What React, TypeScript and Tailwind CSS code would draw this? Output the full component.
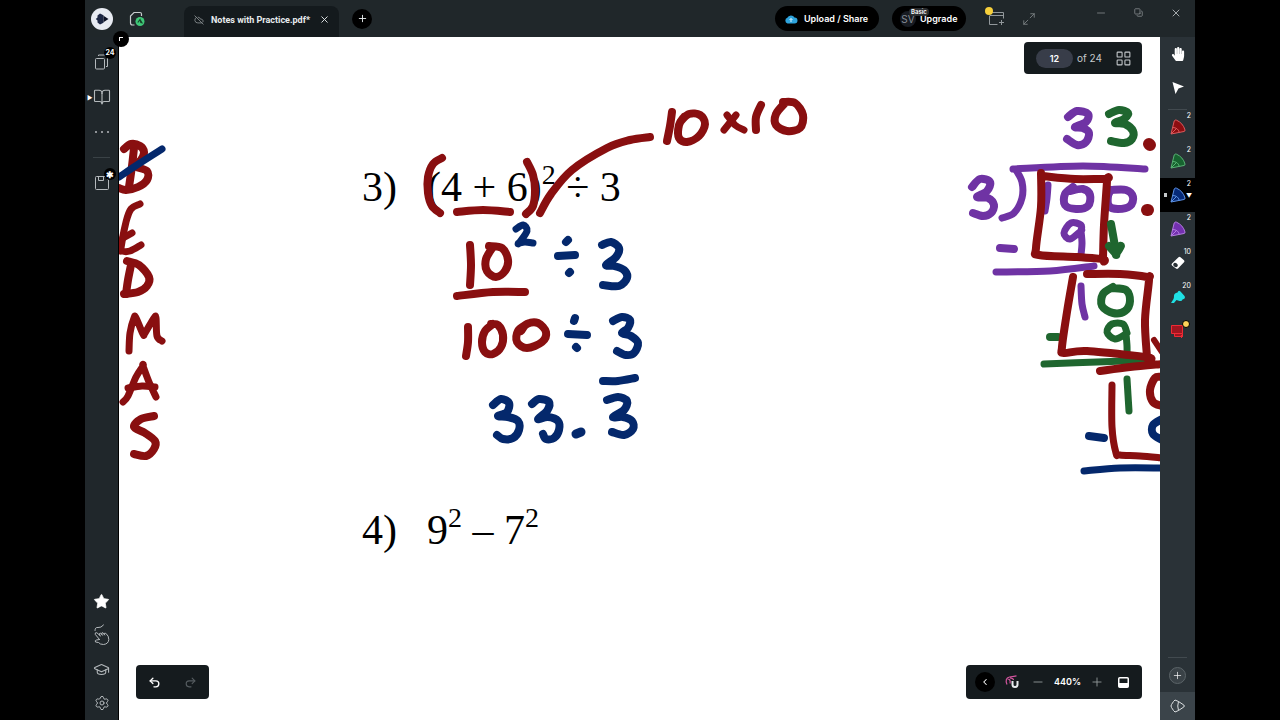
import type { ReactNode } from 'react'
import { BookOpen, ChevronLeft, CloudOff, Copy, GraduationCap, LayoutGrid, Maximize2, Minus, Plus, Redo2, Settings, Star, Undo2, X } from 'lucide-react'
import { FaHandPaper } from 'react-icons/fa'

type Point = [number, number]

interface Stroke {
  color: string
  points: Point[]
  width?: number
}

const RED = '#890f10'
const BLUE = '#04286c'
const PURPLE = '#6f33a4'
const GREEN = '#1f662f'

// Pen strokes in document coordinates, in drawing order. A repeated point makes a sharp corner.
const STROKES: Stroke[] = [
  // B E D M A S
  { color: RED, points: [[134, 148], [132, 166], [129, 187]] },
  { color: RED, points: [[124, 149], [131, 144], [140, 146], [144, 152], [141, 160], [135, 166], [147, 171], [147, 180], [138, 187], [126, 190], [119, 188]] },
  { color: BLUE, width: 7, points: [[119, 177], [140, 163], [162, 149]] },
  { color: RED, width: 7, points: [[140, 204], [131, 209], [126, 222], [121, 248], [122, 251], [130, 251], [141, 245]] },
  { color: RED, width: 7, points: [[132, 233], [123, 238]] },
  { color: RED, points: [[131, 265], [128, 280], [126, 294]] },
  { color: RED, points: [[127, 261], [139, 265], [149, 277], [147, 286], [138, 292], [124, 294]] },
  { color: RED, width: 7, points: [[129, 351], [130, 333], [134, 318], [136, 318], [143, 334], [145, 333], [154, 318], [156, 318], [157, 336], [162, 341]] },
  { color: RED, width: 7, points: [[123, 402], [128, 396], [136, 377], [143, 366], [143, 366], [149, 382], [156, 397]] },
  { color: RED, width: 7, points: [[128, 388], [142, 386], [155, 387]] },
  { color: RED, points: [[154, 416], [141, 419], [134, 427], [145, 433], [155, 441], [154, 449], [146, 456], [134, 454]] },
  // working for question 3
  { color: RED, points: [[442, 158], [433, 164], [428, 177], [428, 193], [432, 206], [440, 213]] },
  { color: RED, points: [[457, 212], [483, 210], [510, 212]] },
  { color: RED, points: [[527, 162], [533, 175], [535, 190], [533, 206], [526, 214]] },
  { color: RED, points: [[540, 213], [551, 194], [572, 170], [607, 148], [630, 140], [650, 137]] },
  { color: RED, points: [[470, 245], [471, 265], [470, 285]] },
  { color: RED, points: [[489, 246], [502, 248], [508, 260], [505, 271], [496, 277], [487, 271], [486, 259], [493, 247]] },
  { color: RED, points: [[457, 296], [493, 292], [525, 292]] },
  { color: BLUE, width: 7, points: [[516, 229], [523, 225], [527, 231], [519, 243], [519, 243], [525, 242], [533, 243]] },
  { color: BLUE, points: [[568, 240], [566, 242]] },
  { color: BLUE, points: [[558, 256], [575, 255]] },
  { color: BLUE, points: [[569, 273], [570, 272]] },
  { color: BLUE, points: [[602, 245], [611, 242], [619, 248], [616, 257], [606, 265], [614, 266], [624, 270], [627, 278], [619, 286], [603, 285]] },
  { color: RED, points: [[468, 327], [468, 342], [466, 356]] },
  { color: RED, points: [[493, 324], [485, 331], [482, 342], [485, 352], [493, 354], [501, 347], [503, 335], [498, 325], [491, 324]] },
  { color: RED, points: [[521, 331], [527, 324], [538, 323], [546, 332], [542, 342], [527, 348], [517, 342], [518, 331], [527, 324]] },
  { color: BLUE, points: [[575, 318], [574, 321]] },
  { color: BLUE, points: [[568, 334], [587, 335]] },
  { color: BLUE, points: [[576, 347], [577, 348]] },
  { color: BLUE, points: [[613, 321], [622, 317], [630, 320], [628, 328], [622, 333], [631, 336], [638, 343], [634, 353], [626, 355], [617, 351]] },
  { color: BLUE, points: [[603, 381], [618, 381], [635, 378]] },
  { color: BLUE, points: [[493, 405], [501, 399], [509, 403], [507, 412], [498, 416], [508, 417], [518, 421], [519, 430], [513, 438], [503, 439], [497, 435]] },
  { color: BLUE, points: [[532, 404], [539, 399], [549, 402], [547, 411], [538, 419], [548, 417], [558, 421], [559, 430], [554, 438], [546, 439], [543, 434]] },
  { color: BLUE, width: 9, points: [[576, 434], [581, 432]] },
  { color: BLUE, points: [[607, 400], [618, 397], [627, 401], [624, 410], [613, 417], [623, 417], [632, 421], [633, 429], [624, 435], [612, 432]] },
  // 10 x 10
  { color: RED, points: [[672, 112], [670, 126], [667, 141]] },
  { color: RED, points: [[681, 121], [689, 114], [700, 115], [705, 124], [699, 136], [687, 142], [679, 138], [679, 125], [684, 117]] },
  { color: RED, width: 7, points: [[727, 115], [735, 125], [744, 130]] },
  { color: RED, width: 7, points: [[736, 115], [724, 130]] },
  { color: RED, points: [[761, 105], [756, 117], [756, 130]] },
  { color: RED, points: [[783, 102], [795, 103], [803, 115], [800, 128], [787, 131], [776, 125], [776, 114], [785, 103]] },
  // long division
  { color: PURPLE, points: [[1068, 117], [1077, 111], [1088, 114], [1086, 122], [1075, 127], [1083, 128], [1089, 133], [1086, 142], [1077, 145], [1067, 139]] },
  { color: GREEN, points: [[1109, 114], [1119, 110], [1128, 113], [1124, 119], [1115, 123], [1125, 124], [1133, 131], [1132, 139], [1124, 143], [1111, 141]] },
  { color: RED, width: 12, points: [[1149, 144], [1150, 145]] },
  { color: RED, width: 12, points: [[1147, 210], [1148, 210]] },
  { color: PURPLE, width: 7, points: [[1013, 169], [1083, 166], [1145, 169]] },
  { color: PURPLE, width: 7, points: [[1016, 170], [1022, 182], [1022, 198], [1014, 213], [1002, 218]] },
  { color: PURPLE, points: [[972, 187], [980, 179], [990, 182], [987, 191], [977, 197], [988, 198], [994, 205], [991, 213], [983, 216], [973, 213]] },
  { color: PURPLE, width: 7, points: [[1048, 185], [1047, 198], [1045, 211]] },
  { color: PURPLE, points: [[1073, 187], [1065, 194], [1065, 205], [1076, 209], [1088, 206], [1090, 195], [1083, 189], [1070, 191]] },
  { color: PURPLE, points: [[1111, 190], [1126, 190], [1133, 197], [1130, 206], [1118, 209], [1109, 206], [1108, 196], [1111, 190]] },
  { color: PURPLE, width: 7, points: [[1081, 231], [1081, 225], [1071, 223], [1064, 233], [1070, 239], [1081, 231], [1081, 231], [1082, 243], [1081, 255]] },
  { color: RED, points: [[1041, 173], [1041, 207], [1036, 248], [1039, 255], [1077, 257], [1103, 259], [1103, 259], [1104, 225], [1107, 181], [1106, 179], [1075, 179], [1043, 176]] },
  { color: PURPLE, points: [[1000, 248], [1014, 249]] },
  { color: PURPLE, width: 7, points: [[996, 272], [1050, 271], [1094, 266]] },
  { color: GREEN, points: [[1111, 224], [1113, 235], [1116, 252]] },
  { color: GREEN, points: [[1109, 246], [1116, 254], [1116, 254], [1121, 246], [1116, 248]] },
  { color: PURPLE, width: 7, points: [[1081, 286], [1082, 304], [1085, 317]] },
  { color: GREEN, points: [[1113, 287], [1103, 294], [1102, 306], [1113, 313], [1125, 311], [1130, 301], [1126, 290], [1112, 288]] },
  { color: GREEN, width: 7, points: [[1127, 333], [1123, 324], [1112, 324], [1107, 332], [1115, 339], [1126, 334], [1126, 334], [1127, 346], [1127, 359]] },
  { color: GREEN, points: [[1050, 337], [1058, 337]] },
  { color: GREEN, width: 7, points: [[1044, 364], [1097, 362], [1143, 360]] },
  { color: RED, points: [[1073, 277], [1067, 312], [1062, 347], [1064, 353], [1087, 351], [1147, 357], [1147, 357], [1145, 320], [1149, 280], [1147, 277], [1120, 274], [1087, 274]] },
  { color: RED, width: 6, points: [[1154, 340], [1162, 352]] },
  { color: RED, points: [[1100, 371], [1130, 367], [1162, 364]] },
  { color: GREEN, width: 7, points: [[1127, 379], [1128, 395], [1129, 411]] },
  { color: RED, width: 7, points: [[1112, 385], [1112, 427], [1116, 453], [1120, 455], [1140, 456], [1162, 458]] },
  { color: RED, points: [[1162, 377], [1155, 378], [1150, 390], [1153, 402], [1162, 406]] },
  { color: BLUE, points: [[1162, 419], [1153, 425], [1153, 434], [1162, 440]] },
  { color: BLUE, points: [[1089, 436], [1104, 438]] },
  { color: BLUE, width: 7, points: [[1084, 471], [1120, 468], [1162, 468]] },
]

// Catmull-Rom through the sampled points
function toPath(points: Point[]) {
  let d = `M${points[0][0]} ${points[0][1]}`
  for (let i = 0; i < points.length - 1; i++) {
    const p0 = points[i - 1] ?? points[i]
    const p1 = points[i]
    const p2 = points[i + 1]
    const p3 = points[i + 2] ?? p2
    d += `C${p1[0] + (p2[0] - p0[0]) / 6} ${p1[1] + (p2[1] - p0[1]) / 6} ${p2[0] - (p3[0] - p1[0]) / 6} ${p2[1] - (p3[1] - p1[1]) / 6} ${p2[0]} ${p2[1]}`
  }
  return d
}

function InkLayer() {
  return (
    <svg
      className="pointer-events-none absolute left-0 top-0"
      width="1041"
      height="683"
      viewBox="119 37 1041 683"
      fill="none"
      strokeLinecap="round"
      strokeLinejoin="round"
      aria-hidden="true"
    >
      {STROKES.map((s, i) => (
        <path key={i} d={toPath(s.points)} stroke={s.color} strokeWidth={s.width ?? 8} />
      ))}
    </svg>
  )
}

interface ToolButtonProps {
  label: string
  children: ReactNode
  className?: string
}

function ToolButton({ label, children, className = 'h-[34px]' }: ToolButtonProps) {
  return (
    <button aria-label={label} className={`relative flex w-full shrink-0 items-center justify-center ${className}`}>
      {children}
    </button>
  )
}

function Header() {
  return (
    <header className="flex h-[37px] shrink-0 items-center bg-[#20272a] text-[#e8ecee]">
      <button aria-label="Home" className="ml-1.5 flex size-[22px] items-center justify-center rounded-full bg-[#e8ebf2]">
        <svg width="14" height="12" viewBox="0 0 14 12" aria-hidden="true">
          <path d="M5 .5 8.500 2.200v7.600L5 11.500 2.500 9.500V7.500L.8 6l1.700-1.500v-2z" fill="#1d2744" />
          <path d="M8.500 2.700 13.500 6l-5 3.300z" fill="#0d1226" />
        </svg>
      </button>
      <button aria-label="Document saved" className="ml-4 flex size-4 items-center justify-center">
        <svg width="16" height="16" viewBox="0 0 16 16" fill="none" aria-hidden="true">
          <path d="M5.500 14H3.500Q1.500 14 1.500 12V5l3.500-3.500h6Q12.500 1.500 12.500 3v2" stroke="#c6cbcd" strokeWidth="1.200" />
          <circle cx="11" cy="10.500" r="4.500" fill="#3fc878" />
          <path d="M8.800 11.500 11 8.500l1 3.500M11 8.500l2.400 4" stroke="#17452a" strokeWidth="1.200" />
        </svg>
      </button>
      <div className="ml-[39px] flex h-[31px] w-[155px] items-center self-end rounded-t-lg bg-[#141a1d] pb-1 pl-2.5">
        <CloudOff size={10} strokeWidth={2} className="text-[#8b9194]" />
        <span className="ml-[7px] flex-1 whitespace-nowrap font-['Roboto',sans-serif] text-[9px] font-bold leading-3">Notes with Practice.pdf*</span>
        <button aria-label="Close tab" className="mr-[9px]">
          <X size={11} strokeWidth={2} />
        </button>
      </div>
      <button aria-label="New tab" className="ml-[13px] flex size-5 items-center justify-center rounded-full bg-black">
        <Plus size={11} strokeWidth={2} />
      </button>

      <div className="ml-auto flex items-center">
        <button className="flex h-[25px] w-[104px] items-center rounded-full bg-black pl-[9px] text-[9px] font-semibold leading-3 text-white">
          <svg width="14" height="14" viewBox="0 0 14 14" className="mr-1.5" aria-hidden="true">
            <path d="M3.500 11.500A3 3 0 0 1 3.300 5.800 4 4 0 0 1 10.500 5.500 3 3 0 0 1 10.500 11.500z" fill="#2ea3dc" />
            <path d="M7 10V6.500M5.500 8 7 6.500 8.500 8" stroke="#dff3ff" fill="none" />
          </svg>
          Upload / Share
        </button>
        <button className="relative ml-[13px] flex h-[25px] w-[74px] items-center rounded-full bg-black pl-2 text-[9px] font-semibold leading-3 text-white">
          <span className="flex size-4 items-center justify-center rounded-full bg-[#171b22] text-[10px] font-normal text-[#858b93]">SV</span>
          <span className="ml-1">Upgrade</span>
          <span className="absolute left-[17px] top-[2px] rounded bg-[#2a2d30] px-0.5 text-[6px] leading-2">Basic</span>
        </button>
        <button aria-label="Add window" className="relative ml-[19px] flex size-[20px] items-center justify-center">
          <svg width="20" height="20" viewBox="0 0 20 20" fill="none" stroke="#92989b" aria-hidden="true">
            <path d="M7 3.500h11.500v6M4.500 7v8.500h8M4.500 6.500h14M16.500 11v5M14 13.500h5" />
          </svg>
          <span className="absolute -top-0.5 left-0 size-2 rounded-full bg-[#f7d03b]" />
        </button>
        <button aria-label="Full screen" className="ml-[17px]">
          <Maximize2 size={14} strokeWidth={1.5} className="text-[#7d8386]" />
        </button>
        <button aria-label="Minimize" className="mb-3 ml-[59px]">
          <Minus size={12} strokeWidth={1.5} className="text-[#8b9194]" />
        </button>
        <button aria-label="Restore" className="mb-3 ml-[27px]">
          <Copy size={9} strokeWidth={2} className="-scale-x-100 rotate-90 text-[#8b9194]" />
        </button>
        <button aria-label="Close" className="mb-3 ml-[27px] mr-[13px]">
          <X size={12} strokeWidth={2} className="text-[#a4a9ac]" />
        </button>
      </div>
    </header>
  )
}

function LeftBar() {
  return (
    <nav className="flex w-[34px] shrink-0 flex-col border-r border-black bg-[#20272b] pt-2 text-[#b4b9bc]">
      <ToolButton label="Pages">
        <svg width="14" height="16" viewBox="0 0 14 16" fill="none" stroke="currentColor" aria-hidden="true">
          <rect x=".5" y="4.500" width="9" height="10.500" rx="1" />
          <path d="M3.500 2V1h9v11.500h-1.500" />
        </svg>
        <span className="absolute right-[2px] top-[2px] flex size-3 items-center justify-center rounded-full bg-black text-[7px] font-bold text-white">24</span>
      </ToolButton>
      <ToolButton label="Book view" className="h-[36px]">
        <span className="absolute left-0.5 text-[6px] text-white">▶</span>
        <BookOpen size={18} strokeWidth={1.5} />
      </ToolButton>
      <ToolButton label="More">
        <span className="flex gap-1">
          <i className="size-0.5 rounded-full bg-current" />
          <i className="size-0.5 rounded-full bg-current" />
          <i className="size-0.5 rounded-full bg-current" />
        </span>
      </ToolButton>
      <hr className="mx-2 my-2 border-[#3a4246]" />
      <ToolButton label="Save">
        <svg width="14" height="14" viewBox="0 0 14 14" fill="none" stroke="currentColor" aria-hidden="true">
          <path d="M1.500.5H10L13.500 4v8.500q0 1-1 1h-11q-1 0-1-1v-11q0-1 1-1zM3.500.5v4h5v-4" />
        </svg>
        <span className="absolute right-[2px] top-[2px] flex size-3 items-center justify-center rounded-full bg-black text-[9px] font-bold leading-none text-white">✱</span>
      </ToolButton>
      <div className="mt-auto flex flex-col">
        <ToolButton label="Favorites">
          <Star size={17} className="fill-white text-white" strokeWidth={1} />
        </ToolButton>
        <ToolButton label="Gestures">
          <svg width="18" height="22" viewBox="0 0 18 22" fill="none" stroke="currentColor" strokeLinecap="round" strokeLinejoin="round" aria-hidden="true">
            <path d="M2 6.500Q2 3 5 3.500T10.500 1" />
            <path d="M6.500 15.500 2.200 10.300Q1.800 8.300 3.800 8.700L7.500 12M6.800 11.300Q5.500 8.800 7.500 9l2 2.300M8.800 10.500Q8 8.300 10 8.700l1.700 2.300M11.200 10.300Q11 8.500 12.800 9.300 16 12 15.800 15.500 15.500 20 10.500 20.500 7 20.500 5.500 18.500L2.500 18Q1.500 16.500 3.500 16l3-.5" />
          </svg>
        </ToolButton>
        <ToolButton label="Lessons">
          <GraduationCap size={17} strokeWidth={1.5} />
        </ToolButton>
        <ToolButton label="Settings">
          <Settings size={16} strokeWidth={1.5} />
        </ToolButton>
      </div>
    </nav>
  )
}

interface Pen {
  name: string
  fill: string
  stroke: string
  active?: boolean
}

const PENS: Pen[] = [
  { name: 'Red pen', fill: '#8d0d10', stroke: '#dc5a5d' },
  { name: 'Green pen', fill: '#17632f', stroke: '#59b375' },
  { name: 'Blue pen', fill: '#062a78', stroke: '#5d93e6', active: true },
  { name: 'Purple pen', fill: '#7430b0', stroke: '#b47de0' },
]

function Count({ value }: { value: number }) {
  return <span className="absolute right-1 top-0.5 text-[7px] leading-none text-white">{value}</span>
}

function RightBar() {
  return (
    <nav className="flex w-[35px] shrink-0 flex-col bg-[#2a3237] text-white">
      <ToolButton label="Pan">
        <FaHandPaper size={14} />
      </ToolButton>
      <ToolButton label="Select">
        <svg width="14" height="14" viewBox="0 0 14 14" fill="#fff" aria-hidden="true">
          <path d="M1.500 1 13 5.500 7.500 7.500 4.500 13z" />
        </svg>
      </ToolButton>
      <hr className="mx-2 mt-1 border-[#424a4f]" />
      {PENS.map((pen) => (
        <ToolButton key={pen.name} label={pen.name} className={pen.active ? 'h-[34px] bg-black' : 'h-[34px]'}>
          {pen.active && (
            <>
              <span className="absolute left-1 h-1 w-[3px] bg-[#c4c8ca]" />
              <span className="absolute right-[3px] text-[6px]">▼</span>
            </>
          )}
          <svg width="16" height="16" viewBox="0 0 16 16" fill="none" stroke={pen.stroke} strokeLinejoin="round" aria-hidden="true">
            <path d="M1 15 4.200 2Q5 .5 6.500 1.200 13 4 15 11q.2 1.200-1 1.500z" fill={pen.fill} />
            <path d="M2.500 8.500Q8 8.500 9.300 13.300M1 15l5-5" />
          </svg>
          <Count value={2} />
        </ToolButton>
      ))}
      <ToolButton label="Eraser">
        <svg width="16" height="14" viewBox="0 0 16 14" aria-hidden="true">
          <path d="M2 7.500 8.500 1.200q1-.8 2 0l3.500 3q1 1 0 2L8 12.500q-1 .8-2 0L2 9.500q-1-1 0-2z" fill="#fff" />
          <ellipse cx="5.500" cy="9" rx="2.500" ry="2" fill="#2a3237" transform="rotate(40 5.500 9)" />
        </svg>
        <Count value={10} />
      </ToolButton>
      <ToolButton label="Highlighter">
        <svg width="16" height="14" viewBox="0 0 16 14" fill="#1fe0e4" aria-hidden="true">
          <path d="M4 7Q3.500 3 7.500 2.500 8.500-.5 10.500 1.500L14.500 6q1.500 3-2 3.500-.5 2-3 1.500L6.500 10 4 13H1l2.500-4z" />
        </svg>
        <Count value={20} />
      </ToolButton>
      <ToolButton label="Screen capture">
        <svg width="16" height="16" viewBox="0 0 16 16" fill="#a01620" stroke="#f02a34" aria-hidden="true">
          <path d="M1.500 2.500h11v8h-11zM4.500 10.500v3h8v-3M11 12l1.500 1.500L11 15" />
        </svg>
        <span className="absolute right-[5px] top-[6px] size-2 rounded-full border border-black bg-[#ffd45a]" />
      </ToolButton>
      <div className="mt-auto flex flex-col">
        <hr className="mx-2 border-[#424a4f]" />
        <ToolButton label="Add tool">
          <span className="flex size-[17px] items-center justify-center rounded-full border border-[#5b6468] bg-[#3a4247]">
            <Plus size={11} strokeWidth={1.5} />
          </span>
        </ToolButton>
        <ToolButton label="Toolbox" className="h-[28px] bg-[#3b444a]">
          <svg width="16" height="14" viewBox="0 0 16 14" fill="none" stroke="#dde1e3" strokeLinejoin="round" aria-hidden="true">
            <path d="M5 1 8.500 2.500 13.800 6q1 1 0 2L8.500 11.500 5 13 3.500 11.500 1.500 8.500q-1-1.500 0-3L3.500 2.500zM8.500 2.500Q7 7 8.500 11.500" />
          </svg>
        </ToolButton>
      </div>
    </nav>
  )
}

function Worksheet() {
  return (
    <ol className="pl-[243px] pt-[126px] font-['Liberation_Serif',serif] text-[42px] leading-[48px] text-black">
      <li className="flex">
        <span className="w-[65px]">3)</span>
        <span>
          (4 + 6)<sup className="static align-[17px] text-[28px]">2</sup> ÷ 3
        </span>
      </li>
      <li className="mt-[295px] flex">
        <span className="w-[65px]">4)</span>
        <span>
          9<sup className="static align-[17px] text-[28px]">2</sup> – 7<sup className="static align-[17px] text-[28px]">2</sup>
        </span>
      </li>
    </ol>
  )
}

function PageNav() {
  return (
    <div className="absolute right-[18px] top-[5px] flex h-8 w-[118px] items-center rounded bg-[#151b1e] pl-3 text-[10px] text-[#c6cacd]">
      <input aria-label="Page number" defaultValue="12" className="h-[19px] w-[37px] rounded-full bg-[#383d49] text-center text-[9px] font-semibold text-white" />
      <span className="ml-1">of 24</span>
      <button aria-label="Page overview" className="ml-auto mr-2.5">
        <LayoutGrid size={17} strokeWidth={1.5} />
      </button>
    </div>
  )
}

function History() {
  return (
    <div className="absolute bottom-[21px] left-[17px] flex h-[34px] w-[73px] items-center justify-around rounded bg-[#151b1e]">
      <button aria-label="Undo">
        <Undo2 size={13} strokeWidth={2.5} className="text-white" />
      </button>
      <button aria-label="Redo" disabled>
        <Redo2 size={13} strokeWidth={2} className="text-[#565d61]" />
      </button>
    </div>
  )
}

function ZoomBar() {
  return (
    <div className="absolute bottom-[21px] right-[18px] flex h-[34px] w-[176px] items-center rounded bg-[#151b1e] pl-[9px] text-white">
      <button aria-label="Collapse" className="flex size-5 items-center justify-center rounded-full bg-black">
        <ChevronLeft size={10} strokeWidth={2.5} />
      </button>
      <button aria-label="Snap" className="ml-2.5">
        <svg width="14" height="14" viewBox="0 0 14 14" fill="none" aria-hidden="true">
          <path d="M2 9.500Q-.5 3 4.500 2T11.500.8M2.500 4q3.500 0 2.500 4.500M5 2.800q3.500.5 3.500 2.200" stroke="#d4569f" strokeWidth="1.200" />
          <path d="M7.500 6v3.500a2.500 2.500 0 0 0 5 0V6" stroke="#e8ecee" strokeWidth="2" />
        </svg>
      </button>
      <button aria-label="Zoom out" className="ml-3">
        <Minus size={14} strokeWidth={1.5} className="text-[#969b9e]" />
      </button>
      <span className="w-[45px] text-center text-[9px] font-semibold leading-3">440%</span>
      <button aria-label="Zoom in">
        <Plus size={14} strokeWidth={1.5} className="text-[#969b9e]" />
      </button>
      <button aria-label="Fit page" className="ml-auto mr-[13px]">
        <svg width="11" height="11" viewBox="0 0 11 11" aria-hidden="true">
          <rect x=".75" y=".75" width="9.500" height="9.500" rx="1" fill="none" stroke="#fff" strokeWidth="1.500" />
          <rect x="1" y="6" width="9" height="4" fill="#fff" />
        </svg>
      </button>
    </div>
  )
}

export default function App() {
  return (
    <div className="h-screen bg-black px-[85px] font-['Inter',sans-serif]">
      <div className="flex h-full flex-col">
        <Header />
        <div className="relative flex min-h-0 flex-1">
          <LeftBar />
          <main className="relative min-w-0 flex-1 overflow-hidden bg-white">
            <Worksheet />
            <InkLayer />
            <PageNav />
            <History />
            <ZoomBar />
          </main>
          <RightBar />
          <button aria-label="Collapse sidebar" className="absolute -top-1.5 left-7 flex size-4 items-center justify-center rounded-full bg-black">
            <i className="size-1 border-l border-t border-white" />
          </button>
        </div>
      </div>
    </div>
  )
}
